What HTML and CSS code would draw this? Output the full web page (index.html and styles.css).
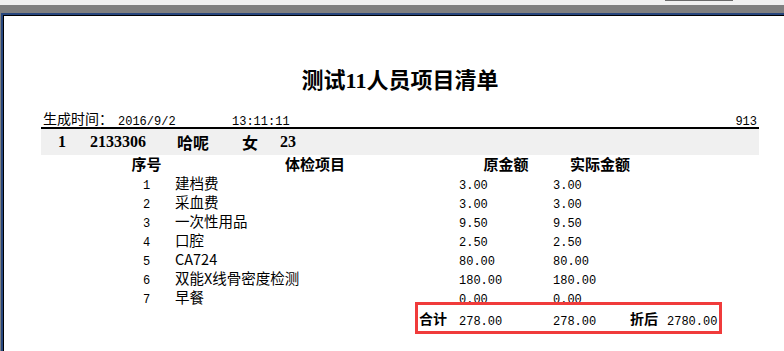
FILE: index.html
```html
<!DOCTYPE html>
<html lang="zh-CN">
<head>
<meta charset="utf-8">
<title>测试11人员项目清单</title>
<link rel="stylesheet" href="styles.css">
</head>
<body>
<div class="app">
  <div class="topstrip"><div class="thumb"></div></div>
  <div class="frame">
    <div class="sheet">
      <div class="paper">
        <div class="report">
          <h1 class="title">测试11人员项目清单</h1>
          <div class="info">
            <span class="lbl">生成时间：</span>
            <span class="date num">2016/9/2</span>
            <span class="time num">13:11:11</span>
            <span class="pageno num">913</span>
          </div>
          <div class="band">
            <span class="b-no">1</span>
            <span class="b-id">2133306</span>
            <span class="b-name">哈呢</span>
            <span class="b-sex">女</span>
            <span class="b-age">23</span>
          </div>
          <div class="row head">
            <span class="c-no">序号</span>
            <span class="c-item">体检项目</span>
            <span class="c-amt">原金额</span>
            <span class="c-amt">实际金额</span>
          </div>
          <div class="row"><span class="c-no num">1</span><span class="c-item">建档费</span><span class="c-amt num">3.00</span><span class="c-amt num">3.00</span></div>
          <div class="row"><span class="c-no num">2</span><span class="c-item">采血费</span><span class="c-amt num">3.00</span><span class="c-amt num">3.00</span></div>
          <div class="row"><span class="c-no num">3</span><span class="c-item">一次性用品</span><span class="c-amt num">9.50</span><span class="c-amt num">9.50</span></div>
          <div class="row"><span class="c-no num">4</span><span class="c-item">口腔</span><span class="c-amt num">2.50</span><span class="c-amt num">2.50</span></div>
          <div class="row"><span class="c-no num">5</span><span class="c-item">CA724</span><span class="c-amt num">80.00</span><span class="c-amt num">80.00</span></div>
          <div class="row"><span class="c-no num">6</span><span class="c-item">双能X线骨密度检测</span><span class="c-amt num">180.00</span><span class="c-amt num">180.00</span></div>
          <div class="row"><span class="c-no num">7</span><span class="c-item">早餐</span><span class="c-amt num">0.00</span><span class="c-amt num">0.00</span></div>
          <div class="totals">
            <span class="t-lbl">合计</span>
            <span class="t-v1 num">278.00</span>
            <span class="t-v2 num">278.00</span>
            <span class="t-lbl2">折后</span>
            <span class="t-v3 num">2780.00</span>
          </div>
        </div>
      </div>
    </div>
  </div>
</div>
</body>
</html>
```
FILE: styles.css
```css
html, body {
  margin: 0;
  padding: 0;
  background: #ffffff;
}

body {
  font-family: "Noto Sans CJK SC", "Liberation Sans", sans-serif;
  color: #000;
}

.app {
  display: flex;
  flex-direction: column;
  width: 784px;
  height: 351px;
  overflow: hidden;
}

.topstrip {
  flex: none;
  height: 5px;
  background: #f0f0f0;
}

.thumb {
  margin-left: 665px;
  width: 68px;
  height: 1px;
  background: #6b6b6b;
}

.frame {
  flex: 1;
  display: flex;
  flex-direction: column;
  background: #808080;
  padding: 8px 0 0 1px;
}

.sheet {
  flex: 1;
  display: flex;
  flex-direction: column;
  border-top: 2px solid #27467d;
  border-left: 2px solid #27467d;
}

.paper {
  flex: 1;
  background: #fff;
  border-top: 1px solid #000;
  border-left: 1px solid #000;
  padding-left: 37px;
}

.report {
  width: 718px;
}

.title {
  margin: 51px 0 0;
  height: 28px;
  line-height: 28px;
  text-align: center;
  font-family: "Liberation Serif", "Noto Sans CJK SC", serif;
  font-size: 22px;
  font-weight: bold;
}

.info {
  margin-top: 14px;
  height: 18px;
  display: flex;
  align-items: center;
  padding: 0 2px;
  border-bottom: 2px solid #000;
  font-size: 14px;
  line-height: 18px;
}

.num {
  font-family: "Liberation Mono", monospace;
  font-size: 12px;
  padding-top: 8px;
}

.lbl { width: 75px; }
.date { width: 114px; }
.pageno { margin-left: auto; }

.band {
  height: 26px;
  display: flex;
  align-items: center;
  padding-left: 17px;
  background: #f0f0f0;
  font-family: "Liberation Serif", "Noto Sans CJK SC", serif;
  font-size: 16px;
  font-weight: bold;
}

.b-no { width: 32px; }
.b-id { width: 87px; }
.b-name { width: 65px; }
.b-sex { width: 38px; }

.row {
  display: grid;
  grid-template-columns: 57px 284px 94px 94px;
  grid-template-rows: 19px;
  align-items: center;
  height: 19px;
  padding-left: 77px;
  font-size: 14.5px;
  line-height: 19px;
}

.row.head {
  grid-template-rows: 18px;
  height: 18px;
  line-height: 18px;
  font-size: 15px;
  font-weight: bold;
}

.c-no { text-align: center; }
.head .c-item { text-align: center; padding-right: 4px; }
.head .c-amt { text-align: center; }

.totals {
  position: relative;
  display: flex;
  align-items: center;
  box-sizing: border-box;
  width: 307px;
  height: 32px;
  margin: -4px 0 0 374px;
  padding-left: 1px;
  border: 3px solid #f03b3b;
  font-size: 14px;
  font-weight: bold;
}

.totals .num { font-weight: normal; }
.t-lbl { width: 40px; }
.t-v1 { width: 94px; }
.t-v2 { width: 77px; }
.t-lbl2 { width: 37px; }
```
